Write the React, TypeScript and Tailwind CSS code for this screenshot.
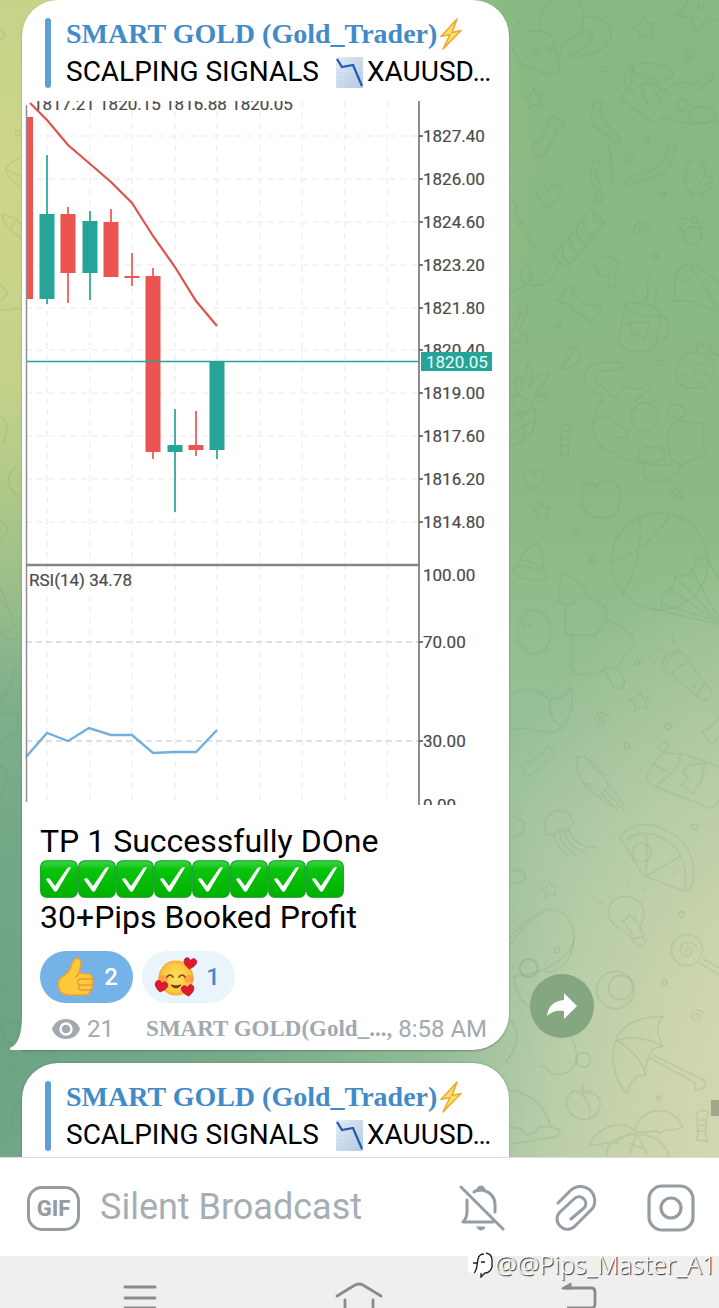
import type { ReactNode } from "react";

interface Candle {
  x: number;
  open: number;
  close: number;
  high: number;
  low: number;
  up: boolean;
}

const candles: Candle[] = [
  { x: 47, open: 214, close: 299, high: 155, low: 304, up: true },
  { x: 68, open: 214, close: 273, high: 207, low: 303, up: false },
  { x: 90, open: 221, close: 273, high: 211, low: 300, up: true },
  { x: 111, open: 222, close: 277, high: 209, low: 277, up: false },
  { x: 132, open: 276, close: 278, high: 253, low: 286, up: false },
  { x: 153, open: 276, close: 452, high: 268, low: 459, up: false },
  { x: 175, open: 445, close: 452, high: 409, low: 512, up: true },
  { x: 196, open: 445, close: 450, high: 411, low: 456, up: false },
  { x: 217, open: 361, close: 450, high: 361, low: 459, up: true },
];

const prices = [
  { label: "1827.40", y: 136 },
  { label: "1826.00", y: 179 },
  { label: "1824.60", y: 222 },
  { label: "1823.20", y: 265 },
  { label: "1821.80", y: 308 },
  { label: "1820.40", y: 350 },
  { label: "1819.00", y: 393 },
  { label: "1817.60", y: 436 },
  { label: "1816.20", y: 479 },
  { label: "1814.80", y: 522 },
];

const gridX = [47, 90, 132, 175, 217, 260, 302, 345, 387];

function Chart() {
  return (
    <svg
      viewBox="22 101 487 704"
      className="block w-full mt-[10px] font-[Roboto,sans-serif]"
      role="img"
      aria-label="XAUUSD price chart"
    >
      <g stroke="#f1f1f3" strokeWidth="1.5" strokeDasharray="6 5">
        {gridX.map((x) => (
          <line key={x} x1={x} x2={x} y1="101" y2="805" />
        ))}
        {prices.map((p) => (
          <line key={p.y} x1="26" x2="419" y1={p.y} y2={p.y} />
        ))}
      </g>
      <g stroke="#d6d6d6" strokeWidth="1.5" strokeDasharray="6 4">
        <line x1="26" x2="419" y1="642" y2="642" />
        <line x1="26" x2="419" y1="741" y2="741" />
      </g>
      <path d="M26 117h7v182h-7z" fill="#ec5451" />
      {candles.map((c) => (
        <g key={c.x} fill={c.up ? "#26a498" : "#ec5451"}>
          <rect x={c.x - 1} y={c.high} width="2" height={c.low - c.high} opacity="0.85" />
          <rect x={c.x - 7.5} y={c.open} width="15" height={c.close - c.open} />
        </g>
      ))}
      <path
        d="M30 103 47 120 68 145 89 163 111 182 132 203 153 236 175 267 196 301 217 326"
        fill="none"
        stroke="#dc5450"
        strokeWidth="2.2"
      />
      <path
        d="M26 757 47 733 68 741 89 728 111 735H132L153 753 175 752H196L217 730"
        fill="none"
        stroke="#72afe0"
        strokeWidth="2.4"
      />
      <path d="M26 361.5H420" stroke="#26a498" strokeWidth="1.6" />
      <path d="M26.5 105V802" stroke="#919191" strokeWidth="1.5" />
      <path d="M419 101V805" stroke="#8d8d8d" strokeWidth="2" />
      <path d="M26 565H420" stroke="#858585" strokeWidth="2.5" />
      <g fontSize="17" fill="#4b4b4b" stroke="#4b4b4b" strokeWidth="0.2">
        <text x="33" y="110">1817.21 1820.15 1816.88 1820.05</text>
        {prices.map((p) => (
          <g key={p.label}>
            <path d={`M419 ${p.y}h4`} strokeWidth="1.5" />
            <text x="423" y={p.y + 6}>{p.label}</text>
          </g>
        ))}
        <text x="29" y="586">RSI(14) 34.78</text>
        <text x="423" y="581">100.00</text>
        <text x="423" y="648">70.00</text>
        <text x="423" y="747">30.00</text>
        <text x="423" y="811">0.00</text>
        <path d="M419 642h4M419 741h4" strokeWidth="1.5" />
      </g>
      <rect x="421" y="352" width="71" height="19" fill="#26a498" />
      <text x="426" y="368" fontSize="17" fill="#e9fffb">1820.05</text>
    </svg>
  );
}

function BoltIcon() {
  return (
    <svg viewBox="0 0 22 32" className="w-[22px] h-8 shrink-0" role="img" aria-label="bolt">
      <path
        d="M17 1 1 18.5 10 16.5 3 31 21 12.5 12 14.5Z"
        fill="#fbe06a"
        stroke="#f0a92e"
        strokeWidth="1.6"
        strokeLinejoin="round"
      />
    </svg>
  );
}

function ChartDownIcon() {
  return (
    <svg viewBox="0 0 27 31" className="w-[27px] h-[31px] shrink-0" role="img" aria-label="chart decreasing">
      <defs>
        <linearGradient id="paper" x1="0" y1="0" x2="1" y2="1">
          <stop offset="0" stopColor="#e8eff7" />
          <stop offset="1" stopColor="#b4cae2" />
        </linearGradient>
      </defs>
      <rect width="27" height="31" fill="url(#paper)" />
      <path
        d="M3 0V31M6 0V31M9 0V31M12 0V31M15 0V31M18 0V31M21 0V31M24 0V31M0 4H27M0 8H27M0 12H27M0 16H27M0 20H27M0 24H27M0 28H27"
        stroke="#b9cbdf"
        strokeWidth="0.3"
      />
      <path d="M1 2 6 10 17 8 26 29" fill="none" stroke="#2059b0" strokeWidth="2.2" />
    </svg>
  );
}

function CheckEmoji() {
  return (
    <svg viewBox="0 0 38 38" className="w-[38px] h-[38px] shrink-0" role="img" aria-label="check">
      <defs>
        <linearGradient id="green" x1="0" y1="0" x2="0" y2="1">
          <stop offset="0" stopColor="#3fd54a" />
          <stop offset="0.25" stopColor="#08c40c" />
          <stop offset="1" stopColor="#00b000" />
        </linearGradient>
      </defs>
      <rect x="0.7" y="0.7" width="36.6" height="36.6" rx="6" fill="url(#green)" stroke="#0f9a22" strokeWidth="1.1" />
      <path d="M6 19.5C7 18 9 18 10 19L15 26 27 8.5C28 7.500 30 7 31 7.500L17 31C16 32 15 32 14 31Z" fill="#fff" />
    </svg>
  );
}

function ThumbEmoji() {
  return (
    <svg viewBox="0 0 38 40" className="w-[38px] h-10" aria-hidden="true">
      <path
        d="M19 2c3-2 6 0 6 4 0 4-2 7-2 10l9 1c3 0 5 2 4 5 1 2 1 4 0 6 1 2 0 4-2 5 0 4-2 5-5 5H14c-5 0-8-1-10-4-2-4-2-9 0-12 2-3 6-4 9-8 3-4 2-9 6-12Z"
        fill="#ffc93c"
        stroke="#efa133"
        strokeWidth="1.5"
      />
      <path d="M36 22H25c-4 0-4 5-1 6h12M24 28c-2 1-2 5 1 5h9M23 16l-3 4" fill="none" stroke="#e79a32" strokeWidth="1.4" strokeLinecap="round" />
    </svg>
  );
}

function HeartsEmoji() {
  const heart = "M0 5C-5 2-7-1-6-4-4-7-1-6 0-3 1-6 4-7 6-4 7-1 5 2 0 5Z";
  return (
    <svg viewBox="0 0 44 40" className="w-11 h-10" aria-hidden="true">
      <defs>
        <radialGradient id="face">
          <stop offset="0" stopColor="#ffdf62" />
          <stop offset="0.8" stopColor="#fdc93e" />
          <stop offset="1" stopColor="#f1a936" />
        </radialGradient>
      </defs>
      <circle cx="22" cy="21" r="17.5" fill="url(#face)" />
      <ellipse cx="9" cy="22" rx="5" ry="4" fill="#fb8a47" opacity="0.6" />
      <ellipse cx="35" cy="22" rx="5" ry="4" fill="#fb8a47" opacity="0.6" />
      <path d="M13 20q3-4 6 0M25 20q3-4 6 0" fill="none" stroke="#7c4819" strokeWidth="1.7" strokeLinecap="round" />
      <path d="M17 28q5 6 10 0-5 2-10 0Z" fill="#6c3c16" stroke="#6c3c16" strokeLinejoin="round" />
      <g fill="#e01931" stroke="#b80f28" strokeWidth="0.8">
        <path d={heart} transform="translate(36 7) rotate(8)" />
        <path d={heart} transform="translate(7 30) rotate(12)" />
        <path d={heart} transform="translate(34 34) rotate(-8)" />
      </g>
    </svg>
  );
}

function ReplyHeader() {
  return (
    <div className="flex gap-[15px] pl-[23px] pt-[15px]">
      <span className="w-[6px] my-[3px] rounded-[3px] bg-[#5f9fd3]" />
      <div className="leading-[38px] whitespace-nowrap">
        <div className="flex items-center gap-[3px] text-[28px] font-bold text-[#438bc8] font-['Liberation_Serif',serif]">
          SMART GOLD (Gold_Trader)
          <BoltIcon />
        </div>
        <div className="flex items-center gap-1 text-[28px] text-black">
          <span className="mr-[13px]">SCALPING SIGNALS</span>
          <ChartDownIcon />
          <span>XAUUSD…</span>
        </div>
      </div>
    </div>
  );
}

interface ReactionProps {
  count: number;
  label: string;
  active?: boolean;
  children: ReactNode;
}

function Reaction({ count, label, active, children }: ReactionProps) {
  return (
    <button
      type="button"
      aria-label={label}
      className={`flex h-[52px] w-[93px] items-center justify-between rounded-full pr-[15px] text-2xl font-medium ${
        active ? "bg-[#73b3e7] pl-4 text-white" : "bg-[#e9f4fb] pl-3 text-[#438bc8]"
      }`}
    >
      {children}
      <span>{count}</span>
    </button>
  );
}

// Wallpaper doodles, drawn on a 3x grid
function Doodles() {
  const star = "M0-34 10-12 34-14 18 6 28 30 2 20-18 38-16 10-38-4-12-10Z";
  const swirl = "M0 4c-8-2-4-16 6-12 14 6 8 28-8 26-22-2-24-36 0-40 14-2 26 4 30 14";
  const bone = "M-8 44C-20 72-52 58-44 38-70 36-62 2-38 10L2-60C-8-90 28-96 34-74 64-74 60-38 34-44Z";
  const heart = "M0 36C-30 18-44-4-30-20-16-32-4-20 0-8 2-28 20-36 32-24 42-4 20 22 0 36Z";
  return (
    <svg
      viewBox="0 0 642 3471"
      preserveAspectRatio="xMaxYMin slice"
      className="absolute top-0 right-0 w-[214px] h-full"
      aria-hidden="true"
    >
      <g fill="none" stroke="#5f8f58" strokeOpacity="0.12" strokeWidth="5" strokeLinejoin="round" strokeLinecap="round">
        <path d="M104 92C104 40 120 10 140 0M222 0C236 20 236 50 232 80 226 110 170 120 164 160M232 50C290 48 320 70 320 100 310 150 250 174 194 168 230 150 260 130 264 110 258 90 236 94 222 104" />
        <path d="M30 60C50 70 66 84 72 98 110 84 140 100 148 130L164 200C160 228 130 226 100 212L50 194 20 140M88 142c-2 20 10 30 16 12M128 136c-4 20 10 24 14 10M20 184l50 26" />
        <path d={star} transform="translate(418 84)" />
        <path d={star} transform="translate(86 295) scale(.9)" />
        <path d="M546 0C546 20 530 30 514 42 534 56 556 46 562 50 560 74 568 96 576 98 592 84 596 66 602 52 620 60 632 62 642 62M580 14c-4 14 14 18 18 0" />
        <path d={swirl} transform="translate(552 168) scale(.8)" />
        <ellipse cx="444" cy="214" rx="62" ry="24" transform="rotate(10 444 214)" />
        <path d="M384 200C350 220 350 260 376 260L384 206M376 260C360 280 346 290 346 298 390 310 400 360 464 366L472 350C520 372 590 380 642 360M376 276C430 230 460 250 474 280 500 244 540 240 560 256L626 218 628 234 578 272M410 256C412 290 424 310 436 322M440 256l30 52" />
        <circle cx="532" cy="315" r="18" />
        <ellipse cx="592" cy="344" rx="40" ry="24" />
        <path d={bone} transform="translate(130 422) scale(.85)" />
        <path d="M272 304C250 340 252 370 284 392 320 408 326 416 328 432L346 430C346 396 310 380 296 364 282 342 284 322 294 310ZM314 436c-12 20 12 24 4 40s8 24 2 40 8 24 2 40M266 482C248 530 254 546 278 570L270 608 284 610C304 572 276 546 272 520L286 492Z" />
        <path d="M490 436C488 500 450 516 380 528L358 544 370 558C420 530 508 550 512 434Z" />
        <path d={swirl} transform="translate(372 480) scale(.75)" />
        <path d="M548 530C530 490 560 474 584 480 606 494 600 520 594 530 630 520 630 560 606 574 560 592 530 570 540 530M582 544c10 16 28 12 34 2M558 584v8M592 582v10" />
        <path d={heart} transform="translate(132 586)" />
        <path d="M256 630 148 766C150 780 170 796 190 802L298 668C290 650 270 632 256 630ZM262 634c-4 14 18 32 34 34M236 660c-4 20 10 42 32 48M214 684c0 24 12 42 32 50M194 708c-2 24 10 44 28 58M172 736c-2 24 8 44 26 58M158 796C154 830 124 860 80 858 40 850 40 806 66 800 90 804 86 850 30 874H14" />
        <path d="M34 660 84 744 92 740 48 664M20 600C38 614 40 630 30 640L48 664" />
        <path d={swirl} transform="translate(406 690)" />
        <ellipse cx="562" cy="706" rx="28" ry="26" />
        <circle cx="536" cy="664" r="9" />
        <circle cx="568" cy="660" r="9" />
        <circle cx="590" cy="678" r="8" />
        <circle cx="526" cy="688" r="7" />
        <path d="M312 830C270 830 258 790 276 776 300 760 340 770 340 800L326 838 334 862 312 862Z" />
        <path d="M154 900C180 890 174 862 200 860L208 888C226 890 234 906 236 912L288 920C290 940 266 950 256 970L226 940C208 944 200 930 198 918Z" />
        <path d="M360 914 340 1024C352 1060 440 1066 452 1040L470 944C452 910 390 904 360 914ZM362 920c20 30 90 36 104 22M466 950c40 0 26 80-12 76M364 970l72-6-16 50-32-20-6 16-6-30ZM390 900q-4-16 0-28M420 902c24-20-8-40 14-74M448 904q12-16 6-38" />
        <path d="M510 900C504 830 520 790 550 796 600 806 620 830 642 850M550 796c40 40 60 90 90 130M504 902l54 2 72 26M526 838q10 16 24 4" />
        <path d="M24 988 48 936M40 1000 66 940M20 1050C60 1056 72 1030 64 998 54 990 46 1000 46 1018 38 1026 28 1030 18 1026" />
        <circle cx="52" cy="928" r="16" />
        <path d="M168 1108C190 1090 176 1060 196 1042 220 1040 236 1060 220 1082 206 1100 186 1108 168 1108M190 1080l24-46" />
        <path d="M570 1060C530 1050 510 1090 514 1140 530 1170 590 1176 620 1140 640 1080 620 1060 570 1060M574 1058l6-30 20 18 16-14 6 28 20 6M540 1090l8 6M566 1086l8 6M590 1090l8 6M534 1120l8 6M566 1118l8 6M600 1118l8 6M556 1146l8 6M584 1142l8 6" />
        <path d="M20 1190C30 1180 60 1190 78 1204 104 1250 98 1310 20 1338M20 1250l74-22M20 1300l72-44M20 1206c40 40 44 90 30 126M44 1188C20 1150 30 1120 46 1130L50 1160 70 1090C88 1110 80 1140 74 1160 90 1130 120 1110 132 1120 130 1150 96 1166 88 1190L124 1180 124 1200 94 1206" />
        <path d="M296 1190C220 1160 220 1096 290 1088H350C364 1100 356 1112 340 1112H300C260 1114 260 1140 300 1164L320 1188C350 1190 340 1170 358 1158L400 1170 420 1152C440 1150 440 1168 424 1176L388 1206M296 1196C260 1230 250 1300 290 1340 350 1380 420 1400 500 1394M270 1260C310 1230 340 1290 370 1290 376 1310 350 1316 342 1310" />
        <circle cx="420" cy="1250" r="42" />
        <path d="M486 1240C480 1210 530 1206 542 1230 550 1250 520 1264 504 1250M500 1272 520 1262 596 1272 594 1340 606 1364 586 1370 530 1396 500 1380C484 1340 484 1300 500 1272M414 1400c0 60 50 50 70 40s40-20 38-44M400 1350c20-10 70-20 80 10s-60 30-80 20Z" />
        <path d="M168 1290 176 1274 198 1274 196 1296 190 1346 190 1368 166 1366 166 1344ZM170 1290l26 6M168 1312l26 6M168 1334l24 6" />
        <path d={heart} transform="translate(86 1436) scale(.9)" />
        <path d={star} transform="translate(110 1531) scale(.75)" />
        <path d={swirl} transform="translate(518 1484) scale(.9)" />
        <path d="M270 1456C230 1446 220 1490 240 1530 260 1560 310 1560 334 1540 356 1500 346 1450 320 1446 290 1440 280 1450 270 1456ZM230 1452c20-10 40-4 46 10" />
      </g>
      <g transform="translate(0 1440)" fill="none" stroke="#5f8f58" strokeOpacity="0.13" strokeWidth="5" strokeLinejoin="round" strokeLinecap="round">
        <circle cx="464" cy="244" r="145" />
        <path d="M404 112C410 200 390 280 354 340M496 104C450 180 390 226 312 248M606 226C590 240 580 236 568 234 576 260 570 270 560 274 540 296 530 284 510 290 510 330 490 330 468 344L470 374 642 424M558 266l84 150M510 290l132 136M490 324l152 104M600 226l42 70M440 386l202 48" />
        <path d="M22 268C50 250 40 210 96 190 116 200 112 236 114 262M22 268C30 300 90 306 118 296 136 280 110 260 90 270L60 256ZM50 240q30 4 60 20" />
        <path d="M176 282C190 284 220 306 242 324 246 336 238 344 242 350 280 360 308 380 306 406L296 418C350 436 384 456 388 490 380 520 362 524 354 530 346 566 320 566 300 562 286 586 260 588 244 576 220 596 204 576 202 560V466L184 464C176 440 182 410 182 374L164 368C160 330 164 290 176 282ZM182 374q20-2 34-12M202 466h70l20-30M298 572l30 50c20 10 34-4 30-20L336 560" />
        <ellipse cx="88" cy="456" rx="49" ry="67" />
        <path d="M52 426l4 14 20-6" />
        <path d="M16 650C60 610 100 630 132 656 170 660 190 640 196 620 212 680 190 750 136 758 90 760 70 730 16 752M136 656c-10 40 10 70 30 80" />
        <path d="M470 560C470 530 500 510 524 514 550 530 546 550 570 570L620 636C618 656 600 664 588 660L500 582C486 584 474 576 470 560ZM480 556q20-34 46-40M546 550q-26 4-46 32M582 600l-20 24M596 614l-20 30M444 546h8M460 500l10 8M502 472l6 18" />
        <path d={star} transform="translate(404 662) scale(.85)" />
        <path d={swirl} transform="translate(286 720) scale(.9)" />
        <path d={bone} transform="translate(98 856) rotate(24) scale(.72)" />
        <path d="M218 830C210 870 226 920 280 950L310 920C300 880 250 820 218 830ZM280 950 320 980M290 940l48 50M300 930l56 60M310 910l46 66M250 840q20 40 40 40M240 912q16-4 20 10" />
        <path d="M424 890 460 830C480 810 500 826 530 820L642 860M424 890C424 910 440 914 460 924L610 982C630 990 636 970 642 960M526 822C520 880 480 890 456 918M440 850l46 26M600 850 590 900 566 940 530 916 550 894 534 880 552 854Z" />
        <circle cx="476" cy="800" r="14" />
        <path d="M642 714C620 730 630 740 590 756 610 770 610 790 624 792L640 768" />
        <path d="M122 1050C110 1000 160 976 190 1000L206 1028 192 1040 190 1054 164 1048 150 1064 124 1062ZM146 1064c10 30 20 50 40 62M162 1056c10 40 30 50 50 70M178 1060c20 50 40 40 62 60M192 1048c20 50 50 54 82 54" />
        <path d="M344 1074C370 1030 420 1030 460 1040 540 1070 570 1120 566 1200 560 1230 540 1240 530 1230L420 1188C390 1160 380 1120 344 1074ZM364 1082C380 1060 420 1056 450 1064 520 1090 550 1140 540 1230M424 1064v124l104-60" />
        <circle cx="410" cy="1118" r="28" />
        <path d={heart} transform="translate(468 1095) scale(.35)" />
        <path d={heart} transform="translate(504 1170) scale(.4)" />
        <path d={star} transform="translate(134 1228) scale(.7)" />
        <path d="M382 1376C370 1350 320 1350 310 1300 308 1260 340 1248 370 1250 410 1256 420 1290 416 1310 400 1340 410 1350 416 1370L384 1376 390 1390C404 1410 420 1400 422 1380M382 1360 354 1322 368 1314 370 1302 388 1322 388 1306 410 1360M280 1306h8M282 1270h10M370 1208v8M412 1232l6-4" />
        <circle cx="546" cy="1410" r="47" />
        <path d={swirl} transform="translate(546 1410)" />
        <path d="M584 1450 642 1484M594 1436 642 1464M16 1394C60 1330 120 1280 150 1290 200 1300 210 1360 206 1390 200 1440 160 1480 120 1476M16 1370C60 1320 100 1296 130 1286" />
        <circle cx="72" cy="1464" r="28" />
        <path d="M16 1010c50-4 60 54 6 60M16 1172c60-8 60 40 4 38" />
      </g>
      <g transform="translate(-375 2820)" fill="none" stroke="#5f8f58" strokeOpacity="0.15" strokeWidth="5" strokeLinejoin="round" strokeLinecap="round">
        <circle cx="706" cy="150" r="56" />
        <circle cx="722" cy="142" r="36" />
        <path d={swirl} transform="translate(950 228) scale(.75)" />
        <path d="M708 300C720 260 770 228 850 230 820 260 836 290 848 320 820 320 810 336 806 350 800 370 790 390 798 406 770 400 744 430 742 460 700 420 690 350 708 300ZM708 300C760 290 800 290 848 320M708 300C760 330 790 370 798 406M806 352 944 428C950 444 940 444 948 450 980 450 984 420 966 418L820 346" />
        <path d="M604 460C570 440 550 480 564 510 580 540 630 550 650 520 676 480 650 450 604 460ZM604 460q30 30 26 76M576 450l26 8 6-22 4 20 24-6" />
        <path d="M630 614C650 560 730 530 770 580 740 580 720 590 710 610 680 600 660 620 630 614ZM764 570C780 500 880 490 908 560 880 580 860 560 840 580 820 560 790 590 764 570ZM680 652C670 570 850 550 866 652M750 640l20-60 30 60M750 610l50 20" />
        <path d="M950 520l16-10 20 6-6 24-4 40 6 24-32-4 4-24ZM954 540h26M952 556h28M950 574h28" />
        <path d="M390 450C460 460 500 510 512 560L540 570 530 590 470 600 394 612M392 562l26 2 20 20 26-6 16-20 32 4M392 240C424 280 410 340 370 370M580 0C576 50 500 100 400 110 410 150 420 190 450 200M484 380c20-10 16 20 40 24 60 0 80-40 56-100-40-60-10-60 14-90" />
        <circle cx="610" cy="360" r="22" />
        <circle cx="446" cy="84" r="26" />
      </g>
      <g fill="none" stroke="#5f8f58" strokeOpacity="0.16" strokeWidth="5">
        <circle cx="298" cy="208" r="8" />
        <circle cx="428" cy="418" r="6" />
        <circle cx="474" cy="584" r="7" />
        <circle cx="452" cy="768" r="9" />
        <circle cx="466" cy="1090" r="8" />
        <circle cx="162" cy="976" r="7" />
        <circle cx="212" cy="1595" r="8" />
        <circle cx="260" cy="1680" r="9" />
        <circle cx="398" cy="1988" r="7" />
        <circle cx="490" cy="2179" r="9" />
        <circle cx="366" cy="2238" r="8" />
        <circle cx="570" cy="2481" r="9" />
        <circle cx="530" cy="2743" r="8" />
        <circle cx="155" cy="2850" r="8" />
        <circle cx="478" cy="2946" r="8" />
        <circle cx="462" cy="3294" r="6" />
      </g>
    </svg>
  );
}

function LeftDoodles() {
  return (
    <svg
      viewBox="0 0 66 3471"
      preserveAspectRatio="xMinYMin slice"
      className="absolute top-0 left-0 w-[22px] h-full"
      aria-hidden="true"
    >
      <g fill="none" stroke="#6f8f55" strokeOpacity="0.14" strokeWidth="5" strokeLinejoin="round">
        <path d="M0 80 16 110 0 120M66 470C40 480 20 500 16 510 30 540 50 556 66 560M16 510 66 530M6 642 50 656 66 680M6 642C10 670 20 680 30 690L66 716M30 690 50 656M0 850 24 880 0 904M0 926C30 940 40 920 66 926" />
        <circle cx="54" cy="400" r="7" />
        <path d="M0 1760 46 1880 0 1904M0 1800 36 1840M0 1890C20 1930 50 1920 66 1900M42 2000C40 2060 20 2080 0 2100M0 2150C40 2120 66 2150 50 2190L0 2230M0 2300C30 2290 20 2380 0 2390M0 2940 36 2920 44 2936 0 2970M66 2580 50 2600 66 2620M10 3100C0 3050 30 3060 34 3070 60 3050 66 3080 50 3100 66 3130 20 3150 10 3100" />
        <path d="M0 1250C20 1260 30 1280 10 1330M50 1400C10 1430 20 1470 60 1490M0 1560C30 1580 30 1600 0 1620" />
        <circle cx="38" cy="3206" r="8" />
        <path d="M66 3300C30 3320 20 3380 60 3400" />
      </g>
    </svg>
  );
}

export default function App() {
  return (
    <div className="relative flex h-screen flex-col overflow-hidden font-[Roboto,sans-serif]">
      <main className="relative flex-1 min-h-0 overflow-hidden bg-[radial-gradient(ellipse_75%_46%_at_0%_14%,#cdd68b_0%,#cbd58ae6_40%,transparent_100%),radial-gradient(ellipse_50%_52%_at_110%_98%,#d9d9b1_0%,#d4d7b0d9_35%,transparent_100%),radial-gradient(ellipse_80%_50%_at_0%_90%,#6ba383_0%,#6ba383cc_40%,transparent_100%),linear-gradient(to_bottom,#88b983_0%,#8ab984_42%,#9cc29d_70%,#a8c8a4_100%)]">
        <Doodles />
        <LeftDoodles />
        <div className="relative flex flex-col gap-[13px] pl-[22px]">
          <div className="flex items-end gap-[21px]">
            <article className="relative w-full max-w-[487px] rounded-[36px] rounded-bl-none bg-white pb-[6px] shadow-[0_1px_2px_#3a5f4680]">
              <ReplyHeader />
              <Chart />
              <div className="mt-[17px] px-[18px] text-[32px] leading-[38px] text-black">
                <p>TP 1 Successfully DOne</p>
                <div className="flex">
                  {Array.from({ length: 8 }, (_, i) => (
                    <CheckEmoji key={i} />
                  ))}
                </div>
                <p>30+Pips Booked Profit</p>
              </div>
              <div className="mt-[15px] flex gap-[9px] px-[18px]">
                <Reaction count={2} label="Thumbs up, 2" active>
                  <ThumbEmoji />
                </Reaction>
                <Reaction count={1} label="Smiling face with hearts, 1">
                  <HeartsEmoji />
                </Reaction>
              </div>
              <footer className="mt-[11px] flex h-[30px] items-center whitespace-nowrap pl-[30px] pr-[22px] text-2xl text-[#a2a9b1]">
                <svg viewBox="0 0 28 20" className="w-7 h-5 mr-[7px]" role="img" aria-label="views">
                  <path d="M14 0C7 0 2 4 0 10c2 6 7 10 14 10s12-4 14-10C26 4 21 0 14 0Z" fill="#a2a9b1" />
                  <circle cx="14" cy="10" r="5.5" fill="none" stroke="#fff" strokeWidth="2.4" />
                </svg>
                <span>21</span>
                <span className="ml-auto text-[23px] font-bold font-['Liberation_Serif',serif]">SMART GOLD(Gold_...,</span>
                <span className="ml-[6px]">8:58 AM</span>
              </footer>
              <svg viewBox="0 0 13 36" className="absolute -left-3 bottom-0 w-[13px] h-9" aria-hidden="true">
                <path d="M13 0H12C12 20 9 30 0 34 0 36 1 36 3 36H13Z" fill="#fff" />
              </svg>
            </article>
            <button
              type="button"
              aria-label="Share"
              className="mb-3 flex h-16 w-16 shrink-0 items-center justify-center rounded-full bg-[#84a681]"
            >
              <svg viewBox="0 0 30 26" className="w-[30px] h-[26px]" aria-hidden="true">
                <path d="M17 0 30 13 17 26V18C9 17 4 19 0 23 1 13 7 8 17 7Z" fill="#fff" />
              </svg>
            </button>
          </div>
          <article className="h-[150px] w-full max-w-[487px] rounded-t-[36px] bg-white shadow-[0_0_2px_#3a5f4680]">
            <ReplyHeader />
          </article>
        </div>
        <span className="absolute right-0 bottom-[41px] h-4 w-2 bg-[#9ea78a]" />
      </main>

      <form className="relative flex h-[99px] shrink-0 items-center border-t border-[#d9dcd9] bg-white pl-[27px] pr-6 pt-[2px]">
        <button
          type="button"
          className="flex h-[45px] w-[53px] shrink-0 items-center justify-center rounded-[15px] border-[3px] border-[#959ca3] text-[22px] font-extrabold text-[#959ca3]"
        >
          GIF
        </button>
        <input
          type="text"
          aria-label="Silent Broadcast"
          placeholder="Silent Broadcast"
          className="ml-5 min-w-0 flex-1 pb-[2px] text-4xl text-black outline-none placeholder:text-[#a5aeb6]"
        />
        <div className="flex shrink-0 items-center gap-[50px] text-[#959ca3]">
          <button type="button" aria-label="Notifications off">
            <svg viewBox="0 0 46 46" className="w-[46px] h-[46px]" fill="none" stroke="currentColor" strokeWidth="3" strokeLinecap="round" strokeLinejoin="round">
              <path d="M2 2 44 44M15 7C16 6 19 5 22 5 31 6 36 12 36 20V27M8 15V27C8 32 6 35 4 37H34" />
              <path d="M18 5a4 4 0 0 1 8 0ZM18 42h8q-1 3-4 3t-4-3Z" fill="currentColor" strokeWidth="1" />
            </svg>
          </button>
          <button type="button" aria-label="Attach file">
            <svg viewBox="0 0 42 46" className="w-[42px] h-[46px]" fill="none" stroke="currentColor" strokeWidth="3" strokeLinecap="round" strokeLinejoin="round">
              <path d="M3 18 15 6C22-1 31 1 36 6 41 12 41 20 36 25L20 41C15 46 9 45 5 41 1 37 1 31 5 27L19 14C23 10 27 12 29 14 31 16 32 20 29 23L16 34" />
            </svg>
          </button>
          <button type="button" aria-label="Record video">
            <svg viewBox="0 0 48 48" className="w-12 h-12" fill="none" stroke="currentColor" strokeWidth="3.2">
              <rect x="2" y="2" width="44" height="44" rx="13" />
              <circle cx="24" cy="24" r="10" />
            </svg>
          </button>
        </div>
      </form>

      <nav className="flex h-[52px] shrink-0 items-start justify-around overflow-hidden bg-[#efefef] px-[30px] pt-[26px] text-[#8b8b8b]">
        <button type="button" aria-label="Recent apps">
          <svg viewBox="0 0 48 40" className="w-12 h-10" fill="none" stroke="currentColor" strokeWidth="2.8" strokeLinecap="round">
            <path d="M9 5h30M9 16h30M9 26h30" />
          </svg>
        </button>
        <button type="button" aria-label="Home">
          <svg viewBox="0 0 48 40" className="w-12 h-10" fill="none" stroke="currentColor" strokeWidth="2.8" strokeLinecap="round">
            <path d="M2 14 20 3Q24 1 28 3L46 14M10 18V38H38V18" />
          </svg>
        </button>
        <button type="button" aria-label="Back">
          <svg viewBox="0 0 48 40" className="w-12 h-10" fill="none" stroke="currentColor" strokeWidth="2.8">
            <path d="M10 6H36Q40 6 40 10V22Q40 26 36 26H12" />
            <path d="M7 6 16 1V7H7Z" fill="currentColor" strokeWidth="1" />
          </svg>
        </button>
      </nav>

      <div className="absolute right-[3px] bottom-[26px] flex items-center text-[25px] leading-9 font-light text-white font-['Noto_Sans',sans-serif] [text-shadow:1px_1px_1px_#222]">
        <svg viewBox="0 0 27 27" className="w-[27px] h-[27px]" aria-hidden="true">
          <path d="M4 0H19Q25 2 25 10V16Q23 22 18 22L13 27 10 22H4Q0 22 0 17V4Q0 0 4 0Z" fill="#fff" />
          <path d="M6 22C9 20 9 14 10 8Q11 3 16 3M5 12h4M13 11h4M18 2Q25 3 24 12V16Q22 22 17 22L13 26V22" fill="none" stroke="#222" strokeWidth="1.4" />
        </svg>
        <span>@@Pips_Master_A1</span>
      </div>
    </div>
  );
}
